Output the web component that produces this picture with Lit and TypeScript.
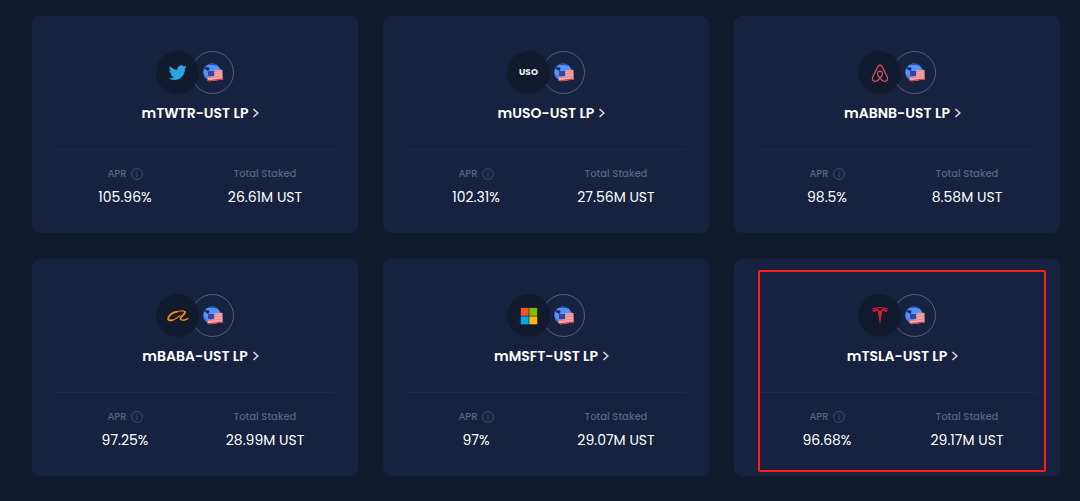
import { LitElement, html, css, svg, nothing } from "lit";
import { customElement, property } from "lit/decorators.js";

type Pool = { asset: string; apr: string; staked: string; marked?: boolean };

const pools: Pool[] = [
  { asset: "TWTR", apr: "105.96%", staked: "26.61M UST" },
  { asset: "USO", apr: "102.31%", staked: "27.56M UST" },
  { asset: "ABNB", apr: "98.5%", staked: "8.58M UST" },
  { asset: "BABA", apr: "97.25%", staked: "28.99M UST" },
  { asset: "MSFT", apr: "97%", staked: "29.07M UST" },
  { asset: "TSLA", apr: "96.68%", staked: "29.17M UST", marked: true },
];

const logos: Record<string, unknown> = {
  TWTR: svg`<path fill="#2aa5df" transform="translate(-0.3 -0.4) scale(0.75)" d="M23.953 4.57a10 10 0 01-2.825.775 4.958 4.958 0 002.163-2.723c-.951.555-2.005.959-3.127 1.184a4.92 4.92 0 00-8.384 4.482C7.69 8.095 4.067 6.13 1.64 3.162a4.822 4.822 0 00-.666 2.475c0 1.71.87 3.213 2.188 4.096a4.904 4.904 0 01-2.228-.616v.06a4.923 4.923 0 003.946 4.827 4.996 4.996 0 01-2.212.085 4.936 4.936 0 004.604 3.417 9.867 9.867 0 01-6.102 2.105c-.39 0-.779-.023-1.17-.067a13.995 13.995 0 007.557 2.209c9.053 0 13.998-7.496 13.998-13.985 0-.21 0-.42-.015-.63A9.935 9.935 0 0024 4.59z"/>`,
  ABNB: svg`<g fill="none" stroke="#d9505a" stroke-width="1.3" stroke-linejoin="round"><path d="M9 1C7.700 1 7.100 2 6.500 3.200C4.800 6.600 3 10 1.700 13.100C.700 15.600 2.300 17.300 4.300 17.300C6.300 17.300 7.900 15.800 9 14.400C10.200 12.900 11.600 11 11.600 9.600C11.600 8 10.600 7.100 9 7.100C7.400 7.100 6.400 8 6.400 9.600C6.400 11 7.800 12.900 9 14.400C10.100 15.800 11.700 17.300 13.700 17.300C15.700 17.300 17.300 15.600 16.300 13.100C15 10 13.200 6.600 11.500 3.200C10.900 2 10.300 1 9 1Z"/></g>`,
  BABA: svg`<g fill="none" stroke="#f08a0c" stroke-linecap="round" stroke-linejoin="round"><path stroke-width="1.900" d="M8 4.700C4 5.200 .500 8.200-.700 10.600C-1.500 13.300 .800 13.900 3.500 13.200"/><path stroke-width="1.200" d="M3.500 13.200C6.500 12.300 9 10.500 10.800 8.700M5.800 5.500C9 3.900 14.500 3.400 16 4.600"/><path stroke-width="2" d="M16 4.900C16.400 6.500 12.800 8.600 11.500 10.900"/><path stroke-width="1.400" d="M11.500 10.900C10.500 13.900 15 13.700 18.900 11.700"/></g>`,
  MSFT: svg`<path fill="#f35325" d="M.800.900h7.900v7.900H.800z"/><path fill="#81bc06" d="M9.300.900H17.200v7.900H9.300z"/><path fill="#05a6f0" d="M.800 9.400h7.900v7.900H.800z"/><path fill="#ffba08" d="M9.300 9.400H17.200v7.900H9.300z"/>`,
  TSLA: svg`<path fill="#e31937" d="M.600 1.400C5.500-.100 12.500-.100 17.400 1.400L17 2.200C12 .900 6 .900 1 2.200ZM1.200 2.900C3.500 2.300 5.200 2.100 6.700 2.100L9 4.300L11.300 2.100C12.800 2.100 14.500 2.300 16.800 2.900C16.200 4.300 15.300 4.900 14.200 5C13.800 4.100 12.900 3.800 11.300 3.700L9 17.600L6.700 3.700C5.100 3.800 4.200 4.100 3.800 5C2.700 4.900 1.800 4.300 1.200 2.900Z"/>`,
};

const ust = svg`
  <circle cx="9" cy="9.200" r="8.700" fill="#5493f7"/>
  <path fill="#2450ad" d="M5.200 1.500C8-.300 12 0 14.800 2.400C13 2.900 12 2.100 10.300 2C8.500 1.900 7 2.500 5.200 1.500Z"/>
  <path fill="#14285b" d="M2.200 4.300L6.200 4.400L6.500 6L5 8.200L4 6.900L1.500 6Z"/>
  <path fill="#4078dd" d="M1 11.300L4.800 13.500L5 16.500C2.800 15.300 1.300 13.200 1 11.300Z"/>
  <path fill="#f2a9ae" d="M5 7.800C10 8.600 14.500 6.300 19.400 7L19.700 16.800C15 16.200 10 18.900 4.600 18.100Z"/>
  <path fill="none" stroke="#e4777e" stroke-width=".8" d="M11.500 8.800C14 8.200 17 7.600 19.400 8.100M11.500 11.200C14.500 10.600 17 10 19.500 10.500M5 14.400C10 15.200 15 12.400 19.600 13.300"/>
  <path fill="none" stroke="#d63c42" stroke-width="1.200" d="M4.700 17.500C10 18.300 15 15.600 19.700 16.300"/>
  <path fill="#3048a5" d="M5 7.800C7.300 8.200 9.500 8.100 11.200 7.800V13C9.500 13.400 7 13.600 4.900 13.200Z"/>`;

@customElement("pool-card")
class PoolCard extends LitElement {
  @property({ attribute: false }) pool!: Pool;

  static styles = css`
    :host { display: block; min-width: 0; }
    .card {
      position: relative;
      box-sizing: border-box;
      padding: 35px 23px 26px;
      border-radius: 8px;
      background: #172240;
    }
    .pair { display: flex; justify-content: center; }
    .disc {
      display: grid;
      place-items: center;
      box-sizing: border-box;
      width: 43px;
      height: 43px;
      border-radius: 50%;
    }
    .asset {
      z-index: 1;
      background: #121a2e;
      color: #eceef3;
      font-size: 9px;
      font-weight: 700;
    }
    .stable { margin-left: -8px; border: 1px solid #555e7e; }
    .icon { display: block; overflow: visible; }
    .title {
      display: grid;
      grid-template-columns: 1fr auto 1fr;
      align-items: center;
      margin: 8px 0 0;
      color: #fff;
      font-size: 14px;
      font-weight: 600;
      line-height: 22px;
      text-decoration: none;
      white-space: nowrap;
    }
    .name { grid-column: 2; }
    .arrow { margin-left: 4px; }
    .stats {
      display: grid;
      grid-template-columns: 1fr 1fr;
      margin: 25px 0 0;
      padding-top: 15px;
      border-top: 1px solid #1f2a48;
      text-align: center;
    }
    .label {
      display: flex;
      align-items: center;
      justify-content: center;
      gap: 4px;
      color: #5b6282;
      font-size: 10px;
      font-weight: 500;
      line-height: 18px;
    }
    .value {
      margin: 4px 0 0;
      color: #fff;
      font-size: 14px;
      font-weight: 400;
      line-height: 20px;
    }
    .info {
      display: block;
      padding: 0;
      border: 0;
      background: none;
      color: #424b69;
    }
    .marker {
      position: absolute;
      inset: 11px 14px 4px 24px;
      border: 2px solid #fb2015;
      border-radius: 2px;
      pointer-events: none;
    }
  `;

  render() {
    const { asset, apr, staked, marked } = this.pool;
    return html`
      <article class="card">
        <div class="pair">
          <span class="disc asset">
            ${logos[asset]
              ? html`<svg class="icon" width="18" height="18" viewBox="0 0 18 18" aria-hidden="true">${logos[asset]}</svg>`
              : asset}
          </span>
          <span class="disc stable">
            <svg class="icon" width="20" height="19" viewBox="0 0 20 19" aria-hidden="true">${ust}</svg>
          </span>
        </div>
        <a class="title" href="#${asset}">
          <span class="name">m${asset}-UST LP</span>
          <svg class="arrow" width="8" height="10" viewBox="0 0 8 10" aria-hidden="true">
            <path d="M1.500 1L5.800 5L1.500 9" fill="none" stroke="#d3d6de" stroke-width="1.600" />
          </svg>
        </a>
        <dl class="stats">
          <div>
            <dt class="label">
              APR
              <button class="info" type="button" aria-label="About APR">
                <svg class="icon" width="12" height="12" viewBox="0 0 12 12" aria-hidden="true">
                  <circle cx="6" cy="6" r="5.400" fill="none" stroke="currentColor" />
                  <path d="M6 5.200V9M6 3V4.200" stroke="currentColor" />
                </svg>
              </button>
            </dt>
            <dd class="value">${apr}</dd>
          </div>
          <div>
            <dt class="label">Total Staked</dt>
            <dd class="value">${staked}</dd>
          </div>
        </dl>
        ${marked ? html`<div class="marker"></div>` : nothing}
      </article>
    `;
  }
}

@customElement("app-root")
class AppRoot extends LitElement {
  static styles = css`
    :host {
      display: block;
      box-sizing: border-box;
      min-height: 100vh;
      padding: 16px 20px 25px 32px;
      background: #121a2e;
      font-family: Poppins, Inter, "Open Sans", sans-serif;
    }
    .grid {
      display: grid;
      grid-template-columns: repeat(auto-fit, minmax(280px, 1fr));
      gap: 26px 25px;
    }
  `;

  render() {
    return html`<main class="grid">
      ${pools.map((pool) => html`<pool-card .pool=${pool}></pool-card>`)}
    </main>`;
  }
}
